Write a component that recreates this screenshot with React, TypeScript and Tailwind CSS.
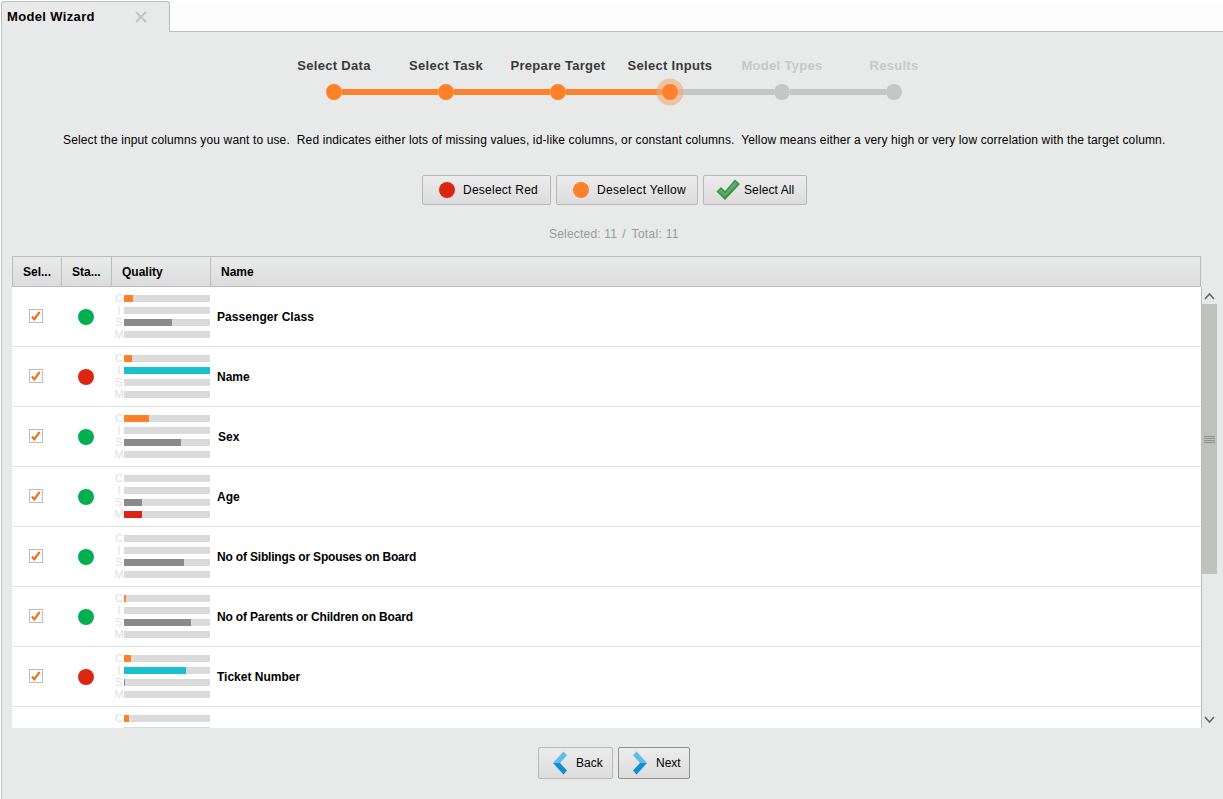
import React from "react";

const font = { fontFamily: '"Liberation Sans", Arial, sans-serif' };

type Row = {
  name: string;
  status: "green" | "red";
  c: number;
  i: number;
  s: number;
  m: number;
  nameClass?: string;
  partial?: boolean;
};

const rows: Row[] = [
  { name: "Passenger Class", status: "green", c: 9, i: 0, s: 48, m: 0, nameClass: "tracking-[0.06px]" },
  { name: "Name", status: "red", c: 8, i: 86, s: 0, m: 0 },
  { name: "Sex", status: "green", c: 25, i: 0, s: 57, m: 0, nameClass: "ml-[1px]" },
  { name: "Age", status: "green", c: 0, i: 0, s: 18, m: 18 },
  { name: "No of Siblings or Spouses on Board", status: "green", c: 0, i: 0, s: 60, m: 0, nameClass: "tracking-[-0.18px]" },
  { name: "No of Parents or Children on Board", status: "green", c: 2, i: 0, s: 67, m: 0, nameClass: "tracking-[-0.16px]" },
  { name: "Ticket Number", status: "red", c: 7, i: 62, s: 1, m: 0 },
  { name: "", status: "green", c: 5, i: 0, s: 0, m: 0, partial: true },
];

const steps = [
  { label: "Select Data", done: true },
  { label: "Select Task", done: true },
  { label: "Prepare Target", done: true },
  { label: "Select Inputs", done: true },
  { label: "Model Types", done: false },
  { label: "Results", done: false },
];

function Bar({ letter, width, color }: { letter: string; width: number; color: string }) {
  return (
    <div className="flex h-[12px] items-center">
      <span className="mr-[1px] ml-[4px] flex w-[8px] justify-center text-[11px] leading-[12px] text-[#e0e0e0]">{letter}</span>
      <div className="h-[7px] w-[86px] bg-[#dbdbdb]">
        <div className={`h-full ${color}`} style={{ width }} />
      </div>
    </div>
  );
}

function Check() {
  return (
    <div className="flex h-[14px] w-[14px] items-center justify-center border border-[#bbbbbb] bg-white">
      <svg width="12" height="12" viewBox="0 0 12 12">
        <path d="M1.8 6.6 L4.4 9.2 L9.6 1.8" fill="none" stroke="#f2701f" strokeWidth="2.2" />
      </svg>
    </div>
  );
}

function TableRow({ row, last }: { row: Row; last: boolean }) {
  return (
    <div className={`flex h-[60px] shrink-0 items-start bg-white ${last ? "" : "border-b border-[#e2e2e2]"}`}>
      <div className="flex h-[59px] w-[49px] items-center justify-center pr-[2px] pb-[1px]">
        {!row.partial && <Check />}
      </div>
      <div className="flex h-[59px] w-[50px] items-center justify-center">
        {!row.partial && (
          <div className={`h-4 w-4 rounded-full ${row.status === "green" ? "bg-[#00b050]" : "bg-[#dc2612]"}`} />
        )}
      </div>
      <div className="w-[99px] pt-[5px]">
        <Bar letter="C" width={row.c} color="bg-[#ff802a]" />
        {!row.partial && (
          <>
            <Bar letter="I" width={row.i} color="bg-[#17c2cd]" />
            <Bar letter="S" width={row.s} color="bg-[#8a8a8a]" />
            <Bar letter="M" width={row.m} color="bg-[#dc2612]" />
          </>
        )}
        {row.partial && (
          <div className="flex h-[12px] items-center">
            <div className="ml-[13px] h-[7px] w-[86px] bg-[#dbdbdb]" />
          </div>
        )}
      </div>
      <div className={`flex h-[59px] items-center pl-[7px] text-[12px] font-bold text-black ${row.nameClass ?? ""}`}>
        {row.name}
      </div>
    </div>
  );
}

function Header({ label, className }: { label: string; className: string }) {
  return (
    <div className={`flex h-full items-center border-r border-[#bcbcbc] pl-[10px] text-[12px] font-bold text-black ${className}`}>
      {label}
    </div>
  );
}

function Btn({ children, className = "" }: { children: React.ReactNode; className?: string }) {
  return (
    <div
      className={`flex items-center rounded-[2px] border bg-gradient-to-b from-[#ececec] to-[#dcdcdc] text-[12px] text-black ${className}`}
    >
      {children}
    </div>
  );
}

function Chevron({ dir }: { dir: "left" | "right" }) {
  const left = dir === "left";
  return (
    <svg width="14" height="24" viewBox="0 0 14 24">
      <path d={left ? "M0 12 L10.5 0.5 L14 4.5 L7 12 Z" : "M14 12 L3.5 0.5 L0 4.5 L7 12 Z"} fill="#62bce9" />
      <path d={left ? "M0 12 L7 12 L14 19.5 L10.5 23.5 Z" : "M14 12 L7 12 L0 19.5 L3.5 23.5 Z"} fill="#0f8fd6" />
    </svg>
  );
}

export default function App() {
  return (
    <div className="flex h-[799px] w-[1223px] flex-col overflow-hidden bg-white" style={font}>
      {/* Tab bar */}
      <div className="flex h-[32px] shrink-0 pt-[1px] pl-[1px]">
        <div className="flex h-[31px] w-[169px] items-center rounded-t-[3px] border-t border-r border-l border-[#bdbdbd] bg-[#e8e9e9] pl-[5px]">
          <span className="w-[128px] text-[13px] font-bold tracking-[0.35px] text-black">Model Wizard</span>
          <svg width="12" height="12" viewBox="0 0 12 12">
            <path d="M1 1 L11 11 M11 1 L1 11" stroke="#c4c4c4" strokeWidth="2" />
          </svg>
        </div>
        <div className="h-[31px] flex-1 border-b border-[#bdbdbd] bg-[#fdfdfd]" />
      </div>

      {/* Main */}
      <div className="ml-[1px] flex min-h-0 flex-1 flex-col border-l border-[#bdbdbd] bg-[#e8e9e9]">
        {/* Steps */}
        <div className="mt-[21px] flex h-[25px] shrink-0 pl-[276px]">
          {steps.map((s) => (
            <div
              key={s.label}
              className={`flex w-[112px] shrink-0 items-center justify-center text-[13px] font-bold tracking-[0.3px] whitespace-nowrap ${s.done ? "text-[#3a3a3a]" : "text-[#c8c8c8]"}`}
            >
              {s.label}
            </div>
          ))}
        </div>
        <div className="mt-[6px] flex h-4 shrink-0 items-center pl-[324px]">
          {steps.map((s, idx) => (
            <React.Fragment key={s.label}>
              <div
                className={`relative h-4 w-4 shrink-0 rounded-full ${s.done ? "bg-[#ff802a]" : "bg-[#c6c6c6]"} ${idx === 3 ? "shadow-[0_0_0_5.5px_rgba(240,170,120,0.6)]" : ""}`}
              />
              {idx < 5 && (
                <div className={`h-[6px] w-[96px] shrink-0 ${idx < 3 ? "bg-[#ff802a]" : "bg-[#c6c6c6]"}`} />
              )}
            </React.Fragment>
          ))}
        </div>

        {/* Description */}
        <div className="mt-[32px] h-[16px] shrink-0 pl-[61px] text-[12px] leading-[16px] tracking-[0.132px] whitespace-pre text-black">
          {"Select the input columns you want to use.  Red indicates either lots of missing values, id-like columns, or constant columns.  Yellow means either a very high or very low correlation with the target column."}
        </div>

        {/* Actions */}
        <div className="mt-[27px] flex h-[30px] shrink-0 gap-[5px] pl-[420px]">
          <Btn className="w-[129px] border-[#b8b8b8] pl-[16px]">
            <div className="h-4 w-4 rounded-full bg-[#dc2612]" />
            <span className="ml-2 tracking-[0.25px]">Deselect Red</span>
          </Btn>
          <Btn className="w-[142px] border-[#b8b8b8] pl-[16px]">
            <div className="h-4 w-4 rounded-full bg-[#ff802a]" />
            <span className="ml-2 tracking-[0.33px]">Deselect Yellow</span>
          </Btn>
          <Btn className="w-[104px] border-[#b8b8b8] pl-[12px]">
            <svg width="25" height="22" viewBox="0 0 25 22">
              <path d="M0.5 12.5 L5 8 L9 12 L19 0.5 L24 5 L9 21 Z" fill="#3f9049" />
              <path d="M2.5 12.5 L5 10 L9 14.5 L19 2.5 L21.5 5 L9 17.5 Z" fill="#5fb066" />
            </svg>
            <span className="ml-[3px] tracking-[0.1px]">Select All</span>
          </Btn>
        </div>

        <div className="mt-[21px] flex h-[16px] shrink-0 pl-[547px] text-[12px] leading-[16px] whitespace-pre text-[#9a9a9a]">
          <span className="tracking-[0.2px]">Selected: 11</span>
          <span className="ml-[5px]">/</span>
          <span className="ml-[6px] tracking-[0.3px]">Total: 11</span>
        </div>

        {/* Table */}
        <div className="mt-[14px] flex h-[472px] shrink-0 flex-col pl-[10px]">
          <div className="flex h-[31px] w-[1189px] shrink-0 border border-[#bcbcbc] bg-gradient-to-b from-[#e9eaea] to-[#dcdcdc]">
            <Header label="Sel..." className="w-[49px]" />
            <Header label="Sta..." className="w-[50px]" />
            <Header label="Quality" className="w-[99px]" />
            <div className="flex h-full items-center pl-[10px] text-[12px] font-bold text-black">Name</div>
          </div>
          <div className="flex min-h-0 flex-1">
            <div className="flex w-[1190px] flex-col overflow-hidden border-r border-[#bcbcbc]">
              {rows.map((r, i) => (
                <TableRow key={i} row={r} last={i === rows.length - 1} />
              ))}
            </div>
            <div className="flex h-full w-[15px] flex-col">
              <div className="flex h-[17px] shrink-0 items-center justify-center">
                <svg width="11" height="8" viewBox="0 0 11 8">
                  <path d="M1 7 L5.5 2 L10 7" fill="none" stroke="#666" strokeWidth="1.6" />
                </svg>
              </div>
              <div className="flex h-[270px] shrink-0 flex-col items-center justify-center gap-[1px] bg-[#c0c2c0]">
                <div className="h-[1px] w-[11px] bg-[#909090]" />
                <div className="h-[1px] w-[11px] bg-[#909090]" />
                <div className="h-[1px] w-[11px] bg-[#909090]" />
                <div className="h-[1px] w-[11px] bg-[#909090]" />
              </div>
              <div className="flex-1" />
              <div className="flex h-[17px] shrink-0 items-center justify-center">
                <svg width="11" height="8" viewBox="0 0 11 8">
                  <path d="M1 1 L5.5 6 L10 1" fill="none" stroke="#666" strokeWidth="1.6" />
                </svg>
              </div>
            </div>
          </div>
        </div>

        {/* Footer */}
        <div className="mt-[19px] flex h-[32px] shrink-0 gap-[5px] pl-[536px]">
          <Btn className="w-[75px] border-[#b8b8b8] pl-[14px]">
            <Chevron dir="left" />
            <span className="ml-[9px]">Back</span>
          </Btn>
          <Btn className="w-[72px] border-[#929292] pl-[14px]">
            <Chevron dir="right" />
            <span className="ml-[9px]">Next</span>
          </Btn>
        </div>
      </div>
    </div>
  );
}
